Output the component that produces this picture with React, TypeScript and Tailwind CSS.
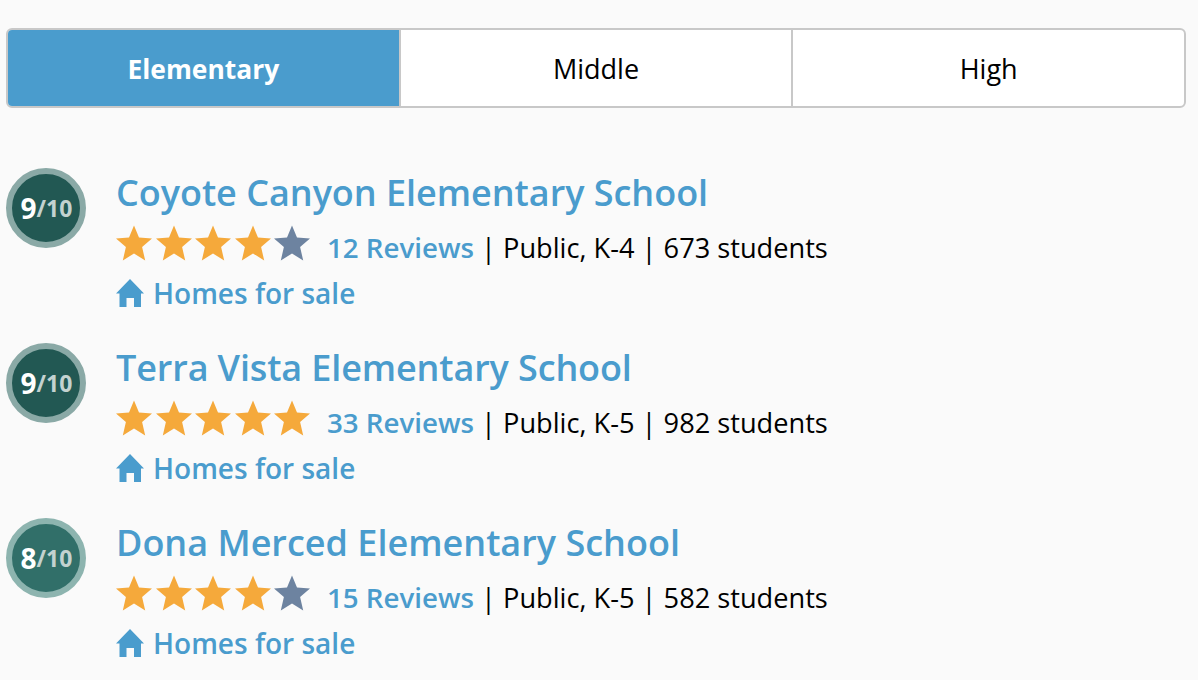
const schools = [
  { name: "Coyote Canyon Elementary School", titleClass: "tracking-[-0.03px]", score: 9, stars: 4, reviews: "12 Reviews", info: "Public, K-4", students: "673 students" },
  { name: "Terra Vista Elementary School", titleClass: "tracking-[-0.13px]", score: 9, stars: 5, reviews: "33 Reviews", info: "Public, K-5", students: "982 students" },
  { name: "Dona Merced Elementary School", titleClass: "", score: 8, stars: 4, reviews: "15 Reviews", info: "Public, K-5", students: "582 students" },
];

function Star({ filled }: { filled: boolean }) {
  return (
    <svg viewBox="0 0 36 36" className={filled ? "w-9 h-9 fill-[#f5a93b]" : "w-9 h-9 fill-[#6d83a0]"}>
      <path d="M18 0.5 L23 12.6 L36 13.5 L26.1 22 L29.2 35.5 L18 28.5 L6.8 35.5 L9.9 22 L0 13.5 L13 12.6 Z" />
    </svg>
  );
}

function House() {
  return (
    <svg viewBox="0 0 28 28" className="w-7 h-7 shrink-0 fill-[#4a9ccd]">
      <path d="M14 0 L28 14.5 L25 14.5 L25 28 L18 28 L18 19 L10.5 19 L10.5 28 L3.5 28 L3.5 14.5 L0 14.5 Z" />
    </svg>
  );
}

function ScoreBadge({ score }: { score: number }) {
  const ring = score === 9 ? "border-[#8aa9a6] bg-[#225853]" : "border-[#8db4af] bg-[#316f69]";
  return (
    <div className={`w-20 h-20 shrink-0 rounded-full border-[6px] flex items-center justify-center pl-[1px] ${ring}`}>
      <span className="text-white font-bold text-[28px] leading-none">{score}</span>
      <span className="text-[#c3d2d0] font-bold text-[23px] leading-none">/10</span>
    </div>
  );
}

export default function App() {
  return (
    <div className="w-[1198px] h-[680px] overflow-hidden bg-[#fafafa] px-[6px] pt-[28px] font-['Open_Sans',sans-serif]">
      <div className="w-[1180px] h-20 flex border-2 border-[#c8c8c8] rounded-md overflow-hidden bg-white text-[27px] text-black">
        <div className="flex-1 flex items-center justify-center bg-[#4a9ccd] text-white font-bold text-[26.4px] pt-[4px]">Elementary</div>
        <div className="flex-1 flex items-center justify-center border-l-2 border-[#c8c8c8] pt-[2px]">Middle</div>
        <div className="flex-1 flex items-center justify-center border-l-2 border-[#c8c8c8] pt-[2px]">High</div>
      </div>
      <div className="mt-[60px] flex flex-col gap-[35px]">
        {schools.map((s) => (
          <div key={s.name} className="flex gap-[30px] h-[140px]">
            <ScoreBadge score={s.score} />
            <div className="flex flex-col">
              <div className={`text-[36px] leading-[50px] font-semibold text-[#4a9ccd] ${s.titleClass}`}>{s.name}</div>
              <div className="mt-[7px] h-9 flex items-center text-[27.2px] text-black">
                <div className="flex gap-[3.5px]">
                  {[0, 1, 2, 3, 4].map((i) => (
                    <Star key={i} filled={i < s.stars} />
                  ))}
                </div>
                <div className="ml-[17px] pt-[10px] whitespace-pre">
                  <span className="font-semibold text-[#4a9ccd] text-[27.7px]">{s.reviews}</span>
                  {` | ${s.info} | ${s.students}`}
                </div>
              </div>
              <div className="mt-[17px] flex items-center gap-[9px] text-[28px] font-semibold text-[#4a9ccd]">
                <House />
                <span className="leading-7 pt-[1px]">Homes for sale</span>
              </div>
            </div>
          </div>
        ))}
      </div>
    </div>
  );
}
